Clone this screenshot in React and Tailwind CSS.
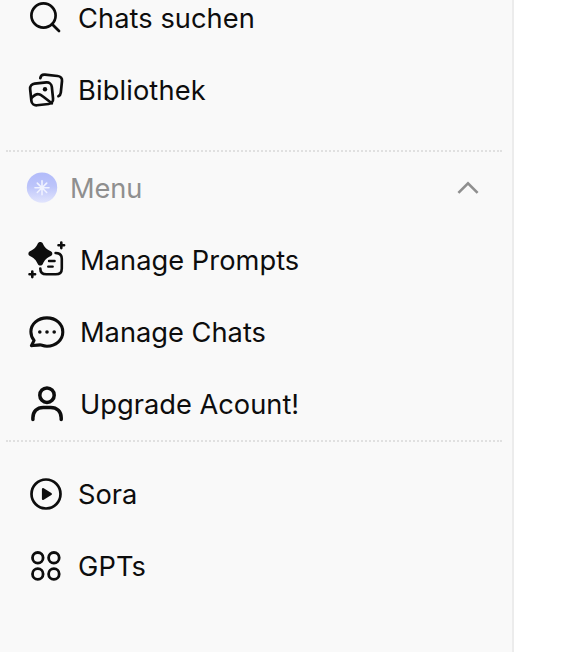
import React from "react";

const Icon = ({ children, strokeWidth = 2.7 }) => (
  <svg
    viewBox="0 0 48 48"
    fill="none"
    stroke="currentColor"
    strokeWidth={strokeWidth}
    strokeLinecap="round"
    strokeLinejoin="round"
    className="w-12 h-12 shrink-0"
  >
    {children}
  </svg>
);

const SearchIcon = () => (
  <Icon>
    <circle cx="21.5" cy="21.5" r="12.1" />
    <path d="M30.2 30.2 L37 37" />
  </Icon>
);

const LibraryIcon = () => (
  <Icon>
    <rect x="8.7" y="16.9" width="21.8" height="21.8" rx="5" transform="rotate(-6 19.6 27.8)" />
    <path d="M9.4 32.2 C12 29.4 14 28.1 16.2 28.2 C18.2 28.2 19.5 29.2 21 30.5 L29.8 37.3" />
    <circle cx="23" cy="23.3" r="2.2" fill="currentColor" stroke="none" />
    <path d="M18.3 12.2 C18.7 9.6 20.6 8.4 23 8.7 L35.6 10 C38.7 10.3 40.3 12.2 40 15 L38.8 26.6 C38.6 28.6 37.9 29.6 36.4 30.2" />
  </Icon>
);

const PromptsIcon = () => (
  <Icon strokeWidth={2.6}>
    <path
      fill="currentColor"
      stroke="none"
      d="M15.8 7.4 C16.8 5.4 19.8 5.4 20.8 7.4 C22.8 11.6 24.6 13.2 28.8 15.2 C30.8 16.3 30.8 19 28.8 20.1 C24.6 22.1 22.8 23.8 20.8 28 C19.8 30 16.8 30 15.8 28 C13.8 23.8 12 22.1 7.9 20.1 C5.9 19 5.9 16.3 7.9 15.2 C12 13.2 13.8 11.6 15.8 7.4 Z"
    />
    <path d="M33.6 17 C37.4 17 39.8 19.2 39.8 22.8 V32.4 C39.8 36.2 37.6 38.3 33.8 38.3 H24.4 C20.4 38.3 18.3 36.2 18.3 32.5" />
    <path d="M27 25 H32.6 M26.2 30.6 H30.7" strokeWidth={2.4} />
    <path d="M39.3 6.5 V12.1 M36.5 9.3 H42.1 M10.3 35.5 V41.1 M7.5 38.3 H13.1" />
  </Icon>
);

const ChatIcon = () => (
  <Icon strokeWidth={3.1}>
    <path d="M9.4 37.7 L12.1 32.4 C9.9 29.8 8.9 26.8 8.9 23.7 C8.9 16 16 9.9 24.9 9.9 C33.8 9.9 40.8 16 40.8 24 C40.8 32 33.8 38.2 25 38.2 C22.4 38.2 20.4 37.5 18.4 36.9 C15.6 37.1 12.6 37.4 9.4 37.7 Z" />
    <g fill="currentColor" stroke="none">
      <circle cx="17.8" cy="24" r="1.8" />
      <circle cx="25" cy="24" r="1.8" />
      <circle cx="32.2" cy="24" r="1.8" />
    </g>
  </Icon>
);

const UserIcon = () => (
  <Icon strokeWidth={3.5}>
    <circle cx="25" cy="15.2" r="7.2" />
    <path d="M10.9 39.6 V37.8 C10.9 31.6 15 27.4 21.2 27.4 H28.8 C35 27.4 39.2 31.6 39.2 37.8 V39.6" />
  </Icon>
);

const SoraIcon = () => (
  <Icon>
    <circle cx="24" cy="24" r="14.5" />
    <path d="M21.1 19.2 L28.7 24 L21.1 28.8 Z" fill="currentColor" strokeWidth={2.4} />
  </Icon>
);

const GptsIcon = () => (
  <Icon strokeWidth={2.8}>
    <circle cx="15.8" cy="15.8" r="5.3" />
    <circle cx="31.9" cy="15.8" r="5.3" />
    <circle cx="15.8" cy="32" r="5.3" />
    <circle cx="31.9" cy="32" r="5.3" />
  </Icon>
);

const topItems = [
  { label: "Chats suchen", icon: SearchIcon, text: "tracking-[0.06px]" },
  { label: "Bibliothek", icon: LibraryIcon, text: "tracking-[0.12px]" },
];

const menuItems = [
  { label: "Manage Prompts", icon: PromptsIcon, text: "ml-0.5 tracking-[0.04px]" },
  { label: "Manage Chats", icon: ChatIcon, text: "ml-0.5" },
  { label: "Upgrade Acount!", icon: UserIcon, text: "ml-0.5" },
];

const bottomItems = [
  { label: "Sora", icon: SoraIcon, text: "" },
  { label: "GPTs", icon: GptsIcon, text: "tracking-[0.1px]" },
];

function NavItem({ item }) {
  const ItemIcon = item.icon;
  return (
    <a className="flex items-center h-[72px] pl-[22px] gap-2">
      <ItemIcon />
      <span className={`pt-0.5 whitespace-nowrap ${item.text}`}>{item.label}</span>
    </a>
  );
}

const Divider = () => <div className="ml-1.5 mr-2.5 border-t-2 border-dotted border-[#e0e0e0]" />;

export default function App() {
  return (
    <div className="h-[652px] w-[582px] bg-white overflow-hidden">
      <aside className="h-full w-[514px] bg-[#f9f9f9] border-r-2 border-[#ececec] overflow-hidden font-['Inter',sans-serif] text-[27.25px] leading-9 text-[#0d0d0d]">
        <nav className="-mt-[18px]">
          {topItems.map((item) => (
            <NavItem key={item.label} item={item} />
          ))}

          {/* Collapsible menu section */}
          <div className="mt-6">
            <Divider />
            <div className="flex items-center h-[72px] pl-[26px] pr-8 text-[#8f8f8f]">
              <svg viewBox="0 0 32 32" className="w-8 h-8 shrink-0">
                <defs>
                  <linearGradient id="badge" x1="0" y1="0" x2="0" y2="1">
                    <stop offset="0" stopColor="#b2bbfa" />
                    <stop offset="0.45" stopColor="#bcc4fa" />
                    <stop offset="1" stopColor="#e2e5fd" />
                  </linearGradient>
                </defs>
                <circle cx="16" cy="15.6" r="15.2" fill="url(#badge)" />
                <path
                  d="M16 8.8 V22.8 M9 15.8 H23 M11.3 11.1 L20.7 20.5 M20.7 11.1 L11.3 20.5"
                  stroke="#f0f2ff"
                  strokeWidth="1.6"
                  strokeLinecap="round"
                />
              </svg>
              <span className="ml-3 pt-0.5 tracking-[-0.1px]">Menu</span>
              <svg viewBox="0 0 24 24" fill="none" stroke="currentColor" strokeWidth="2.6" className="w-6 h-6 ml-auto">
                <path d="M2.4 16.9 L12 7.3 L21.6 16.9" />
              </svg>
            </div>
            {menuItems.map((item) => (
              <NavItem key={item.label} item={item} />
            ))}
            <Divider />
          </div>

          <div className="mt-4">
            {bottomItems.map((item) => (
              <NavItem key={item.label} item={item} />
            ))}
          </div>
        </nav>
      </aside>
    </div>
  );
}
